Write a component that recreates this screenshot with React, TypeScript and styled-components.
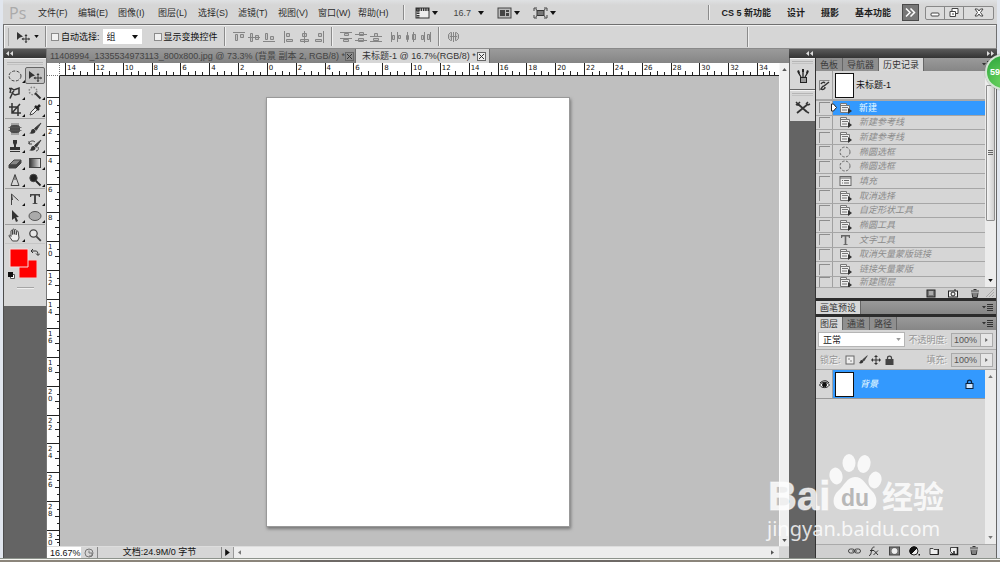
import React from "react";
import styled, { createGlobalStyle, css } from "styled-components";

const GlobalStyle = createGlobalStyle`
  *, *::before, *::after { box-sizing: border-box; }
  html, body { margin: 0; padding: 0; }
  body, button, input, select {
    font-family: "Liberation Sans", "Noto Sans CJK SC", sans-serif;
    font-size: 9px;
    line-height: 12px;
    color: #222;
  }
  button { border: 0; padding: 0; margin: 0; background: none; }
  svg { display: block; flex: none; }
`;

/* ---------- frame ---------- */

const Frame = styled.div`
  position: relative;
  display: flex;
  flex-direction: column;
  height: 100vh;
  min-height: 540px;
  padding: 0 3px;
  overflow: hidden;
  background: #e1e6ee;
`;

const Taskbar = styled.div`
  display: flex;
  align-items: flex-end;
  flex: none;
  height: 4px;
  margin: 0 -3px;
  border-top: 1px solid #8d938c;
  background: #f6f6f2;
  &::after {
    content: "";
    flex: 1;
    height: 2px;
    background: linear-gradient(90deg, #8b857b 30%, #6e6966 30%, #6e6966 64%, #8b857b 64%);
  }
`;

/* ---------- menu bar ---------- */

const MenuBar = styled.header`
  display: flex;
  align-items: center;
  flex: none;
  height: 24px;
  padding: 1px 3px 0 6px;
  background: linear-gradient(#dfe1e3, #d6d6d6 5px);
`;

const Logo = styled.span`
  width: 29px;
  font-family: "Open Sans", sans-serif;
  font-size: 16px;
  line-height: 20px;
  color: #aaa;
`;

const MenuList = styled.nav`
  display: grid;
  grid-template-columns: repeat(8, 40px) 44px;
  margin-right: 1px;
`;

const MenuButton = styled.button`
  text-align: left;
  white-space: nowrap;
  color: #2c2c2c;
`;

const Rule = styled.span<{ $h?: number; $m?: string }>`
  flex: none;
  width: 2px;
  height: ${(p) => p.$h ?? 15}px;
  margin: ${(p) => p.$m ?? "0"};
  border-left: 1px solid #8b8b8b;
  border-right: 1px solid #efefef;
`;

const DropButton = styled.button<{ $w: number; $gap?: number; $end?: boolean }>`
  display: flex;
  align-items: center;
  justify-content: ${(p) => (p.$end ? "flex-end" : "space-between")};
  gap: ${(p) => (p.$end ? "7px" : "0")};
  width: ${(p) => p.$w}px;
  margin-right: ${(p) => p.$gap ?? 13}px;
  color: #444;
`;

const Spacer = styled.span`
  flex: 1;
`;

const Workspaces = styled.nav`
  display: flex;
  gap: 16px;
  margin: 0 11px;
`;

const WorkspaceButton = styled.button`
  font-weight: 700;
  white-space: nowrap;
  color: #1c1c1c;
`;

const MoreButton = styled.button`
  display: grid;
  place-items: center;
  width: 17px;
  height: 17px;
  border: 1px solid #4a4a4a;
  background: #777;
`;

const WindowControls = styled.div`
  display: grid;
  grid-template-columns: 18px 19px 30px;
  height: 14px;
  margin-left: 6px;
  border: 1px solid #888;
  border-radius: 2px;
  background: #dcdcdc;
`;

const WindowButton = styled.button`
  display: grid;
  place-items: center;
  & + & { border-left: 1px solid #888; }
`;

/* ---------- options bar ---------- */

const OptionsBar = styled.div`
  display: flex;
  align-items: center;
  flex: none;
  height: 25px;
  border: 1px solid #707070;
  border-bottom-color: #8a8a8a;
  box-shadow: inset 1px 1px #f2f2f2;
  background: #d6d6d6;
`;

const Grip = styled.span`
  width: 3px;
  height: 18px;
  margin: 0 7px 0 2px;
  border-right: 1px solid #aaa;
`;

const CheckLabel = styled.label`
  display: flex;
  align-items: center;
  gap: 2px;
  white-space: nowrap;
  color: #111;
`;

const Check = styled.input`
  appearance: none;
  width: 8px;
  height: 8px;
  margin: 0;
  border: 1px solid #8b8b8b;
  background: #f1f1f1;
`;

const SelectBox = styled.span<{ $w?: number; $m?: string }>`
  position: relative;
  display: flex;
  flex: ${(p) => (p.$w ? "none" : "1")};
  width: ${(p) => (p.$w ? p.$w + "px" : "auto")};
  height: 15px;
  margin: ${(p) => p.$m ?? "0"};
  background: #fff;
  svg {
    position: absolute;
    right: 4px;
    top: 50%;
    margin-top: -2px;
    pointer-events: none;
  }
`;

const Select = styled.select<{ $framed?: boolean }>`
  appearance: none;
  width: 100%;
  padding: 0 4px;
  border: ${(p) => (p.$framed ? "1px solid #b5b5b5" : "0")};
  border-radius: 0;
  background: #fff;
`;

const IconGroup = styled.div<{ $m?: string; $gap?: number }>`
  display: flex;
  gap: ${(p) => p.$gap ?? 3}px;
  margin: ${(p) => p.$m ?? "0"};
`;

const IconButton = styled.button<{ $w?: number }>`
  display: grid;
  place-items: center;
  flex: none;
  width: ${(p) => p.$w ?? 12}px;
`;

/* ---------- work area ---------- */

const Body = styled.div`
  display: grid;
  grid-template-columns: 44px minmax(0, 1fr) 208px;
  flex: 1;
  min-height: 0;
  background: #646464;
`;

const ToolColumn = styled.aside`
  border-left: 1px solid #4d4d4d;
  border-right: 1px solid #777;
`;

const DarkHeader = styled.div<{ $pad: string }>`
  display: flex;
  align-items: center;
  justify-content: space-between;
  height: 9px;
  padding: ${(p) => p.$pad};
  background: linear-gradient(#5a5a5a, #343434);
`;

const ToolPanel = styled.div`
  padding: 3px 1px 17px;
  border-top: 1px solid #efefef;
  background: #d6d6d6;
`;

const PanelGrip = styled.div`
  height: 3px;
  margin: 0 2px 2px;
  border-top: 1px solid #b5b5b5;
  border-bottom: 1px solid #c2c2c2;
`;

const ToolGroup = styled.div`
  display: grid;
  grid-template-columns: 20px 20px;
  grid-auto-rows: 17px;
  & + & { border-top: 1px solid #a0a0a0; padding-top: 1px; }
`;

const ToolButton = styled.button<{ $on?: boolean }>`
  position: relative;
  display: grid;
  place-items: center;
  ${(p) =>
    p.$on &&
    css`
      border: 1px solid #666;
      border-radius: 2px;
      background: #c3c3c3;
    `}
  &[data-more="true"]::after {
    content: "";
    position: absolute;
    right: 0;
    bottom: 1px;
    border-left: 3px solid transparent;
    border-bottom: 3px solid #111;
  }
`;

const SwatchArea = styled.div`
  padding: 4px 0 0 2px;
  border-top: 1px solid #c5c5c5;
`;

const PanelFoot = styled.div`
  width: 17px;
  height: 2px;
  margin: 8px 0 0 12px;
  border-top: 1px solid #a5a5a5;
  border-bottom: 1px solid #eee;
`;

const Documents = styled.main`
  display: flex;
  flex-direction: column;
  min-width: 0;
  background: #bfbfbf;
`;

const DocTabs = styled.div`
  display: flex;
  height: 14px;
  background: linear-gradient(#9b9b9b, #858585);
`;

const DocTab = styled.div<{ $on?: boolean; $w: number }>`
  display: flex;
  align-items: center;
  justify-content: space-between;
  flex: none;
  width: ${(p) => p.$w}px;
  padding: 0 3px 0 ${(p) => (p.$on ? 6 : 3)}px;
  overflow: hidden;
  white-space: nowrap;
  border-right: 1px solid #6e6e6e;
  background: ${(p) => (p.$on ? "#d6d6d6" : "linear-gradient(#989898, #828282)")};
  button:first-child { color: ${(p) => (p.$on ? "#333" : "#444")}; }
`;

const CloseButton = styled.button<{ $on?: boolean }>`
  display: grid;
  place-items: center;
  flex: none;
  width: 9px;
  height: 9px;
  border: 1px solid #666;
  background: ${(p) => (p.$on ? "#eee" : "#8b8b8b")};
`;

const Stage = styled.div`
  display: grid;
  grid-template-columns: 13px minmax(0, 1fr) 10px;
  grid-template-rows: 13px minmax(0, 1fr) 12px;
  flex: 1;
  min-height: 0;
`;

const RulerCorner = styled.div`
  border-right: 1px dotted #777;
  border-bottom: 1px dotted #777;
  background: #fff;
`;

const TopRuler = styled.div`
  display: grid;
  grid-template-columns: 5px repeat(24, 1fr) 22px;
  overflow: hidden;
  border-bottom: 1px solid #222;
  background: #fff;
`;

const SideRuler = styled.div`
  display: grid;
  grid-template-rows: 21px repeat(15, 1fr) 16px;
  overflow: hidden;
  border-right: 1px solid #222;
  background: #fff;
`;

const RulerCell = styled.div<{ $vertical?: boolean }>`
  display: grid;
  min-width: 0;
  min-height: 0;
  overflow: hidden;
  font-family: "DejaVu Sans", sans-serif;
  font-size: 7px;
  line-height: 7px;
  color: #111;
  ${(p) =>
    p.$vertical
      ? css`
          grid-template-rows: repeat(4, 1fr);
          border-top: 1px solid #222;
        `
      : css`
          grid-template-columns: repeat(4, 1fr);
          border-left: 1px solid #222;
        `}
`;

const RulerNumber = styled.span<{ $vertical?: boolean }>`
  grid-area: ${(p) => (p.$vertical ? "1 / 1 / 5 / 2" : "1 / 1 / 2 / 5")};
  width: ${(p) => (p.$vertical ? "5px" : "auto")};
  padding: ${(p) => (p.$vertical ? "2px 0 0 1px" : "2px 0 0 1px")};
  word-break: break-all;
`;

const Tick = styled.i<{ $vertical?: boolean; $at: number }>`
  ${(p) =>
    p.$vertical
      ? css`
          grid-area: ${p.$at} / 1;
          justify-self: end;
          width: ${p.$at === 3 ? 4 : 2}px;
          border-top: 1px solid #222;
        `
      : css`
          grid-area: 1 / ${p.$at};
          align-self: end;
          height: ${p.$at === 3 ? 4 : 3}px;
          border-left: 1px solid #222;
        `}
`;

const Canvas = styled.div`
  min-width: 0;
  min-height: 0;
  overflow: hidden;
  padding: 21px 0 0 206px;
`;

const Paper = styled.div`
  width: 304px;
  aspect-ratio: 304 / 430;
  border: 1px solid #999;
  background: #fff;
  box-shadow: 1px 2px 3px #777;
`;

const StageScroll = styled.div`
  grid-row: 1 / 3;
  grid-column: 3;
  display: flex;
  flex-direction: column;
  align-items: center;
  justify-content: space-between;
  padding: 5px 0 4px;
  border-left: 1px solid #f8f8f8;
  background: #efefef;
`;

const StatusBar = styled.footer`
  grid-column: 1 / 4;
  display: flex;
  align-items: stretch;
  padding-right: 10px;
  border-top: 1px solid #ddd;
  background: #d6d6d6;
  line-height: 11px;
`;

const ZoomInput = styled.input`
  width: 34px;
  padding: 0 0 0 3px;
  border: 0;
  background: #fff;
  color: #111;
`;

const DocInfo = styled.span`
  width: 125px;
  text-align: center;
  border-left: 1px solid #888;
  border-right: 1px solid #888;
  color: #111;
`;

const HScroll = styled.div`
  display: flex;
  align-items: center;
  justify-content: space-between;
  flex: 1;
  padding: 0 5px 0 4px;
  border-left: 1px solid #999;
  background: #ededed;
`;

/* ---------- right side ---------- */

const RightSide = styled.aside`
  display: grid;
  grid-template-columns: 26px minmax(0, 1fr);
  grid-template-rows: 9px minmax(0, 1fr);
  min-height: 0;
  & > :first-child { grid-column: 1 / 3; }
`;

const Dock = styled.div`
  display: flex;
  flex-direction: column;
  gap: 1px;
  padding-left: 1px;
`;

const DockButton = styled.button`
  display: flex;
  flex-direction: column;
  align-items: stretch;
  height: 31px;
  padding-top: 2px;
  border-top: 1px solid #f2f2f2;
  background: #d6d6d6;
  svg { align-self: center; margin-top: 2px; }
`;

const Panels = styled.div`
  display: flex;
  flex-direction: column;
  gap: 3px;
  min-height: 0;
  border-left: 1px solid #333;
  border-right: 1px solid #666;
  background: #2c2c2c;
`;

const Panel = styled.section<{ $grow?: boolean }>`
  display: flex;
  flex-direction: column;
  flex: ${(p) => (p.$grow ? "1" : "none")};
  min-height: 0;
  background: #d6d6d6;
`;

const PanelTabs = styled.div`
  display: flex;
  align-items: center;
  flex: none;
  height: 13px;
  padding-right: 3px;
  background: linear-gradient(#9a9a9a, #868686);
  & > svg { margin-left: auto; }
`;

const PanelTab = styled.button<{ $on?: boolean }>`
  height: 13px;
  padding: 0 4px;
  white-space: nowrap;
  border-right: 1px solid #666;
  color: ${(p) => (p.$on ? "#333" : "#3c3c3c")};
  background: ${(p) => (p.$on ? "#d8d8d8" : "#8f8f8f")};
`;

const PanelBody = styled.div`
  display: grid;
  grid-template-columns: minmax(0, 1fr) 11px;
  flex: 1;
  min-height: 0;
`;

const Snapshot = styled.div`
  display: flex;
  align-items: center;
  gap: 2px;
  height: 30px;
  border-bottom: 2px solid #a8a8a8;
  color: #111;
`;

const LeadCell = styled.span`
  display: grid;
  place-items: center;
  align-self: stretch;
  flex: none;
  width: 17px;
  border-right: 1px solid #a0a0a0;
`;

const Thumb = styled.span`
  flex: none;
  width: 19px;
  height: 25px;
  border: 1px solid #111;
  background: #fff;
`;

const HistoryList = styled.ul`
  display: grid;
  grid-template-rows: repeat(12, 1fr) 10px;
  height: 186px;
  margin: 0;
  padding: 0;
  list-style: none;
  overflow: hidden;
`;

const HistoryRow = styled.li<{ $on?: boolean }>`
  display: flex;
  align-items: center;
  min-height: 0;
  overflow: hidden;
  border-bottom: 1px solid #a6a6a6;
  &:last-child { align-items: flex-start; border-bottom: 0; }
  color: ${(p) => (p.$on ? "#e9fbff" : "#8c8c8c")};
  font-style: ${(p) => (p.$on ? "normal" : "italic")};
`;

const HistoryBox = styled.span`
  width: 11px;
  height: 11px;
  border-top: 1px solid #8d8d8d;
  border-left: 1px solid #8d8d8d;
`;

const HistoryState = styled.button<{ $on?: boolean }>`
  display: flex;
  align-items: center;
  gap: 7px;
  align-self: stretch;
  flex: 1;
  padding-left: 6px;
  font-style: inherit;
  color: inherit;
  background: ${(p) => (p.$on ? "#3399fe" : "none")};
`;

/* The source marker straddles the divider between the box column and the states. */
const Marker = styled.svg`
  position: absolute;
  margin-left: 15px;
`;

const ScrollTrack = styled.div<{ $top: number }>`
  display: flex;
  flex-direction: column;
  justify-content: space-between;
  align-items: center;
  padding: ${(p) => p.$top}px 1px 5px 0;
  background: #ececec;
`;

const ScrollThumb = styled.div`
  display: grid;
  place-items: center;
  width: 9px;
  height: 136px;
  border: 1px solid #8f8f8f;
  border-radius: 1px;
  background: linear-gradient(90deg, #f4f4f4, #cfcfcf);
`;

const PanelFooter = styled.div<{ $gap: number; $pad: string; $h: number }>`
  display: flex;
  align-items: center;
  justify-content: flex-end;
  gap: ${(p) => p.$gap}px;
  flex: none;
  height: ${(p) => p.$h}px;
  padding: ${(p) => p.$pad};
  border-top: 1px solid #aaa;
  background: #d0d0d0;
`;

const ControlRow = styled.div`
  display: flex;
  align-items: center;
  flex: none;
  height: 20px;
  padding: 0 3px 0 2px;
  border-bottom: 1px solid #aaa;
`;

const DimLabel = styled.label`
  white-space: nowrap;
  color: #969696;
  text-shadow: 1px 1px #f4f4f4;
`;

const LockLabel = styled.span`
  width: 27px;
  padding-left: 2px;
  white-space: nowrap;
  color: #969696;
  text-shadow: 1px 1px #f4f4f4;
`;

const PercentBox = styled.span`
  display: flex;
  flex: none;
  height: 14px;
  margin-left: 4px;
  border: 1px solid #aaa;
`;

const PercentInput = styled.input`
  width: 28px;
  padding: 0 0 0 2px;
  border: 0;
  background: #d0d0d0;
  color: #555;
`;

const PercentArrow = styled.button`
  display: grid;
  place-items: center;
  width: 12px;
  border-left: 1px solid #aaa;
  background: #e6e6e6;
`;

const LayerRow = styled.div`
  display: flex;
  height: 29px;
  border-bottom: 1px solid #999;
`;

const LayerSelect = styled.button`
  display: flex;
  align-items: center;
  gap: 6px;
  flex: 1;
  padding: 0 11px 0 2px;
  font-style: italic;
  color: #e9fbff;
  background: #3399fe;
  svg { margin-left: auto; }
`;

/* ---------- overlays ---------- */

const Badge = styled.span`
  position: absolute;
  top: 54px;
  right: -21px;
  width: 36px;
  height: 36px;
  padding-left: 3px;
  border: 2px solid #d5e5d5;
  border-radius: 50%;
  background: radial-gradient(circle at 50% 80%, #6bd45f, #2ba33b);
  box-shadow: 0 0 1px #555;
  font-weight: 700;
  line-height: 32px;
  color: #fff;
`;

const Watermark = styled.div`
  position: absolute;
  right: 55px;
  bottom: 21px;
  width: 178px;
  color: rgba(255, 255, 255, 0.82);
  pointer-events: none;
`;

const WatermarkLogo = styled.div`
  display: flex;
  align-items: flex-end;
  font-weight: 700;
  white-space: nowrap;
`;

const Bai = styled.span`
  width: 62px;
  padding-left: 1px;
  font-size: 40px;
  line-height: 42px;
  -webkit-text-stroke: 1px rgba(255, 255, 255, 0.5);
`;

const Paw = styled.span`
  position: relative;
  width: 53px;
  height: 60px;
  margin-bottom: 6px;
`;

const Du = styled.span`
  position: absolute;
  left: 12px;
  bottom: 1px;
  font-size: 23px;
  line-height: 24px;
  color: #b8b8b8;
`;

const JingYan = styled.span`
  margin-bottom: 4px;
  font-family: "Noto Sans CJK SC", sans-serif;
  font-size: 31px;
  line-height: 36px;
`;

const WatermarkUrl = styled.div`
  font-family: "Noto Sans", sans-serif;
  font-size: 20px;
  line-height: 24px;
`;

/* ---------- drawings ---------- */

type Dir = "down" | "up" | "left" | "right";
const arrowPath: Record<Dir, string> = {
  down: "M0 0h6L3 4z",
  up: "M0 4h6L3 0z",
  left: "M4 0v6L0 3z",
  right: "M0 0v6l4-3z",
};

const Arrow = ({ dir = "down", size = 6, color = "#111" }: { dir?: Dir; size?: number; color?: string }) => {
  const flat = dir === "down" || dir === "up";
  const box = flat ? "0 0 6 4" : "0 0 4 6";
  const short = Math.round((size * 2) / 3);
  return (
    <svg width={flat ? size : short} height={flat ? short : size} viewBox={box} fill={color}>
      <path d={arrowPath[dir]} />
    </svg>
  );
};

const DoubleArrow = ({ flip }: { flip?: boolean }) => (
  <svg width="7" height="5" viewBox="0 0 7 5" fill="#ddd">
    <path d={flip ? "M0 0l3 2.5L0 5zM4 0l3 2.5L4 5z" : "M3 0v5L0 2.5zM7 0v5L4 2.5z"} />
  </svg>
);

const Draw = ({ w = 14, h = 14, children }: { w?: number; h?: number; children: React.ReactNode }) => (
  <svg width={w} height={h} viewBox={`0 0 ${w} ${h}`} fill="none" stroke="#444" strokeWidth="1">
    {children}
  </svg>
);

const MoveIcon = () => (
  <Draw w={14} h={12}>
    <path d="M1 1v8l2.500-2.200L7 5.500z" fill="#333" stroke="none" />
    <path d="M10 4.500v7M6.500 8h7" stroke="#333" />
    <path d="M10 3l1.500 2h-3zM10 12l1.500-1.500h-3zM5.500 8l2-1.500v3zM14 8l-1.500-1.500v3z" fill="#333" stroke="none" />
  </Draw>
);

const BrushShape = () => (
  <>
    <path d="M13 1L6.500 6.500l1.800 1.800z" fill="#333" />
    <path d="M6 7c-2-.5-3 1-3 2.500-.3 1-1 1.500-2 1.500 2 1.500 7 1 6.500-2.500z" fill="#333" stroke="none" />
  </>
);

const MenuGlyph = () => (
  <svg width="11" height="7" viewBox="0 0 11 7" fill="#333">
    <path d="M0 2h4L2 4.500zM5 0h6v1H5zM5 2h6v1H5zM5 4h6v1H5zM5 6h6v1H5z" />
  </svg>
);

const tools: { name: string; more?: boolean; on?: boolean; art: React.ReactNode }[][] = [
  [
    { name: "椭圆选框工具", more: true, art: <Draw><ellipse cx="7" cy="7" rx="6" ry="5" strokeDasharray="3 1.500" /></Draw> },
    { name: "移动工具", on: true, art: <MoveIcon /> },
    { name: "套索工具", more: true, art: <Draw><path d="M3 2l3 2 5-2v6l-4 1-3-2 2-2M4 8l-2 4.500M1 2.500h2L2 7" stroke="#333" strokeWidth="1.500" /></Draw> },
    { name: "魔棒工具", more: true, art: <Draw><circle cx="5" cy="5" r="3.800" strokeDasharray="1.500 1.500" strokeWidth="1.500" stroke="#888" /><path d="M7 7l5.500 5.500" stroke="#333" strokeWidth="2" /></Draw> },
    { name: "裁剪工具", more: true, art: <Draw><path d="M4 0v10h9M1 4h9v9M4 10l8-9" stroke="#333" strokeWidth="1.500" /></Draw> },
    { name: "吸管工具", more: true, art: <Draw><path d="M2 12l1-3 5-5 2 2-5 5z" fill="#eee" /><path d="M7 3l4 4M8.500 5.500L12 2" stroke="#222" strokeWidth="2.500" /></Draw> },
  ],
  [
    { name: "修复画笔工具", more: true, art: <Draw><rect x="2.500" y="3.500" width="9" height="7" rx="2" fill="#444" /><path d="M4 1v12M6 1v12M8 1v12M10 1v12M0.500 5.500h13M0.500 8.500h13" stroke="#555" strokeWidth=".8" /></Draw> },
    { name: "画笔工具", more: true, art: <Draw><BrushShape /></Draw> },
    { name: "图章工具", more: true, art: <Draw><path d="M5 1h4v3L8 6v2h4v3H2V8h4V6L5 4zM2 12h10v1H2z" fill="#333" stroke="none" /></Draw> },
    { name: "历史画笔工具", more: true, art: <Draw><BrushShape /><path d="M1 5c0-3 4-4 6-2M1 2v3h3M10 8c1 2 0 4-2 4" /></Draw> },
    { name: "橡皮擦工具", more: true, art: <Draw><path d="M1 9l5-5h7l-5 5z" fill="#888" /><path d="M1 9v3h7V9zM8 9l5-5v3l-5 5z" fill="#444" /></Draw> },
    { name: "渐变工具", more: true, art: <Draw><defs><linearGradient id="ramp"><stop stopColor="#333" /><stop offset="1" stopColor="#eee" /></linearGradient></defs><rect x="1.500" y="2.500" width="11" height="9" fill="url(#ramp)" /></Draw> },
    { name: "锐化工具", more: true, art: <Draw><path d="M7 1.500L3 12.500h8zM7 2v5" /></Draw> },
    { name: "减淡工具", more: true, art: <Draw><circle cx="5.500" cy="5" r="3.700" fill="#222" /><path d="M8 8l4.500 4.500" stroke="#222" strokeWidth="1.800" /></Draw> },
  ],
  [
    { name: "钢笔工具", more: true, art: <Draw><path d="M3.500 13V2l7 6.500" /><path d="M3.500 2l1 6" /></Draw> },
    { name: "文字工具", more: true, art: <Draw><path d="M2 2h10v3h-1l-.6-1.500H8V11l1.500.4V12h-5v-.6L6 11V3.500H3.600L3 5H2z" fill="#444" stroke="none" /></Draw> },
    { name: "路径选择工具", more: true, art: <Draw><path d="M4 1v10l2.500-2L8 13l2-1-1.800-3.700L11 8z" fill="#333" stroke="none" /></Draw> },
    { name: "椭圆工具", more: true, art: <Draw><ellipse cx="7" cy="7" rx="6" ry="4.500" fill="#aaa" stroke="#555" /></Draw> },
  ],
  [
    { name: "抓手工具", more: true, art: <Draw><path d="M4.500 13L1 8c0-1.300 1-1.300 2 .5V3c.3-1 1.400-1 1.600 0v3.500V1.800c.3-1 1.500-1 1.700 0v4.500l.2-4c.3-1 1.500-1 1.700 0v4.500l.4-3c.3-1 1.500-1 1.600 0L11 10l-1.500 3z" fill="#eee" /></Draw> },
    { name: "缩放工具", art: <Draw><circle cx="5.500" cy="5.500" r="3.700" fill="#e6e6e6" strokeWidth="1.300" /><path d="M8.300 8.300l4.500 4.500" strokeWidth="1.800" /></Draw> },
  ],
];

const Swatches = () => (
  <svg width="33" height="31" viewBox="0 0 33 31">
    <path d="M12 12h18v18H12z" fill="#f00" stroke="#e8d0d0" />
    <path d="M3 1h18v18H3z" fill="#f00" stroke="#f4dede" />
    <path d="M25 3h4c1 0 2 1 2 4M26 1l-2 2 2 2M29 5.500l2 2 2-2" fill="none" stroke="#333" />
    <path d="M3.500 26.500h4v4h-4z" fill="#fff" stroke="#555" />
    <path d="M1 24h5v5H1z" fill="#111" />
  </svg>
);

/* Two bars of different length hung on a guide line, one drawing per alignment edge. */
const alignArt: Record<string, string> = {
  top: "M0 1.500h12M2.500 3.500h2v6h-2zM7.500 3.500h3v3h-3z",
  vmid: "M0 6.500h12M2.500 2.500h2v8h-2zM7.500 4.500h3v4h-3z",
  bottom: "M0 10.500h12M2.500 2.500h2v6h-2zM7.500 5.500h3v3h-3z",
  left: "M1.500 0v12M3.500 2.500h3v3h-3zM3.500 8.500h6v2h-6z",
  hmid: "M6.500 0v12M4.500 2.500h4v3h-4zM2.500 8.500h8v2h-8z",
  right: "M10.500 0v12M5.500 2.500h3v3h-3zM2.500 8.500h6v2h-6z",
  dtop: "M0 1.500h12M0 7.500h12M4.500 2.500h4v2h-4zM3.500 8.500h5v2h-5z",
  dvmid: "M0 3.500h12M0 9.500h12M4.500 1.500h4v3h-4zM3.500 7.500h5v3h-5z",
  dbottom: "M0 5.500h12M0 10.500h12M4.500 2.500h3v3h-3zM3.500 7.500h5v2h-5z",
  dleft: "M1.500 1v10M7.500 1v10M2.500 4.500h2v4h-2zM8.500 4.500h2v3h-2z",
  dhmid: "M2.500 1v10M8.500 1v10M1.500 4.500h2v4h-2zM7.500 3.500h3v5h-3z",
  dright: "M4.500 1v10M10.500 1v10M1.500 4.500h2v4h-2zM7.500 3.500h2v5h-2z",
  auto: "M6.500 1v10M1.500 3.500l2-2h1v8h-1l-2-2zM8.500 1.500h1l2 2v4l-2 2h-1zM3 5.500h7",
};

const alignNames: Record<string, string> = {
  top: "顶对齐", vmid: "垂直居中对齐", bottom: "底对齐", left: "左对齐", hmid: "水平居中对齐", right: "右对齐",
  dtop: "按顶分布", dvmid: "垂直居中分布", dbottom: "按底分布", dleft: "按左分布", dhmid: "水平居中分布", dright: "按右分布",
  auto: "自动对齐图层",
};

const AlignButtons = ({ kinds, m }: { kinds: string[]; m: string }) => (
  <IconGroup $m={m}>
    {kinds.map((k) => (
      <IconButton key={k} aria-label={alignNames[k]}>
        <svg width="12" height="12" viewBox="0 0 12 12" fill="#c4c4c4" stroke="#858585">
          <path d={alignArt[k]} />
        </svg>
      </IconButton>
    ))}
  </IconGroup>
);

const HistoryIcon = ({ kind }: { kind: string }) => (
  <Draw w={13} h={12}>
    {kind === "ellipse" && <circle cx="6" cy="6" r="5" stroke="#666" strokeDasharray="2.500 1.500" />}
    {kind === "text" && <path d="M2 1h9v3h-1l-.5-1.500H7.300V10l1.500.4V11h-4.500v-.6L5.700 10V2.500H3.500L3 4H2z" fill="#666" stroke="none" />}
    {kind === "fill" && <><rect x="1" y="1.500" width="11" height="9" fill="#eee" stroke="#666" /><path d="M1 3h11M3 5.500h1M5 5.500h5M3 8h1M5 8h5" stroke="#666" /></>}
    {kind === "menu" && (
      <>
        <path d="M1.500 1.500h6v2h3v7h-9z" fill="#eee" stroke="#777" />
        <path d="M1.500 3.500h6M3 5.500h6M3 8h5" stroke="#777" />
        <path d="M9 6v6l4-3z" fill="#333" stroke="none" />
      </>
    )}
  </Draw>
);

const history: [string, string][] = [
  ["新建", "menu"], ["新建参考线", "menu"], ["新建参考线", "menu"], ["椭圆选框", "ellipse"], ["椭圆选框", "ellipse"],
  ["填充", "fill"], ["取消选择", "menu"], ["自定形状工具", "menu"], ["椭圆工具", "menu"], ["文字工具", "text"],
  ["取消矢量蒙版链接", "menu"], ["链接矢量蒙版", "menu"], ["新建图层", "menu"],
];

const TrashIcon = () => (
  <Draw w={10} h={9}><path d="M1 2h8M3.500 .5h3M2 3.500l.7 5h4.600l.7-5M4 3.500v5M6 3.500v5" stroke="#333" /></Draw>
);

const LockIcon = ({ color = "#444", fill = "#444" }: { color?: string; fill?: string }) => (
  <Draw w={9} h={10}><path d="M2.500 5V3c0-2.500 4-2.500 4 0v2" stroke={color} strokeWidth="1.300" /><rect x="1" y="4.500" width="7" height="5" fill={fill} stroke={color} /></Draw>
);

const layerActions: [string, React.ReactNode][] = [
  ["链接图层", <Draw w={13} h={10}><rect x="0.500" y="3" width="6" height="4" rx="2" /><rect x="6.500" y="3" width="6" height="4" rx="2" /><path d="M4 5h5" /></Draw>],
  ["图层样式", <Draw w={12} h={10}><path d="M1 9.500c2 0 2-2 2.500-5S5 1 6.500 1M2 4.500h4M6 4.500l4 4.500M10 4.500L5.500 9" stroke="#333" /></Draw>],
  ["添加蒙版", <Draw w={11} h={10}><rect x="0.500" y="1" width="10" height="8" fill="#777" /><circle cx="5.500" cy="5" r="2.500" fill="#eee" stroke="#eee" /></Draw>],
  ["调整图层", <Draw w={11} h={10}><circle cx="5" cy="5" r="4" fill="#eee" stroke="#222" /><path d="M8 2L2 8A4 4 0 0 1 8 2z" fill="#111" stroke="#111" /><path d="M9.500 8h1.500v1.500H9.500z" fill="#111" stroke="none" /></Draw>],
  ["新建组", <Draw w={10} h={10}><path d="M1 2.500h3l1 1h4v5H1z" fill="#eee" /><path d="M1 8.500h8.500V3" stroke="#222" /></Draw>],
  ["新建图层", <Draw w={10} h={10}><path d="M1.500 1.500h7v7h-4l-3-3z" fill="#eee" /><path d="M1 8.500h7.500V1M5 5v3" stroke="#222" strokeWidth="1.500" /></Draw>],
  ["删除图层", <TrashIcon />],
];

/* ---------- composed parts ---------- */

const menus = ["文件(F)", "编辑(E)", "图像(I)", "图层(L)", "选择(S)", "滤镜(T)", "视图(V)", "窗口(W)", "帮助(H)"];

const TopMenu = () => (
  <MenuBar>
    <Logo>Ps</Logo>
    <MenuList>{menus.map((m) => <MenuButton key={m}>{m}</MenuButton>)}</MenuList>
    <Rule $m="0 10px 0 0" />
    <DropButton $w={23} aria-label="启动 Bridge">
      <Draw w={15} h={12}><rect x="1" y="1" width="13" height="10" fill="#eee" stroke="#333" /><path d="M1 2.500h13M3 1v10" stroke="#333" strokeWidth="3" strokeDasharray="1.500 .8" /></Draw>
      <Arrow />
    </DropButton>
    <DropButton $w={33} $end><span>16.7</span><Arrow /></DropButton>
    <DropButton $w={23} aria-label="排列文档">
      <Draw w={15} h={12}><rect x="1" y="1" width="13" height="10" fill="#bbb" /><path d="M3 3h5v6H3zM9 3h3v2H9zM9 6h3v3H9z" fill="#444" stroke="none" /></Draw>
      <Arrow />
    </DropButton>
    <DropButton $w={23} aria-label="屏幕模式">
      <Draw w={15} h={12}><rect x="4" y="3.500" width="7" height="5" fill="#777" stroke="#333" /><path d="M1 4V1h3M11 1h3v3M14 8v3h-3M4 11H1V8M2.500 2l2 1.500M12.500 2l-2 1.500M2.500 10l2-1.500M12.500 10l-2-1.500" stroke="#444" /></Draw>
      <Arrow />
    </DropButton>
    <Spacer />
    <Rule />
    <Workspaces>
      {["CS 5 新功能", "设计", "摄影", "基本功能"].map((w) => <WorkspaceButton key={w}>{w}</WorkspaceButton>)}
    </Workspaces>
    <MoreButton aria-label="更多工作区">
      <svg width="11" height="9" viewBox="0 0 11 9" fill="none" stroke="#fff" strokeWidth="1.500"><path d="M1 .5l4 4-4 4M5.500 .5l4 4-4 4" /></svg>
    </MoreButton>
    <WindowControls>
      <WindowButton aria-label="最小化"><Draw w={10} h={8}><rect x="1" y="4" width="8" height="3" rx="1" fill="#fff" /></Draw></WindowButton>
      <WindowButton aria-label="还原"><Draw w={10} h={9}><path d="M3 .5h6v5H3z" fill="#fff" /><path d="M1 3.500h5.500v5H1z" fill="#fff" /><path d="M3 6h2" /></Draw></WindowButton>
      <WindowButton aria-label="关闭"><Draw w={10} h={9}><path d="M1 1h2.500L5 3l1.500-2H9L6.500 4.500 9 8H6.500L5 6 3.500 8H1l2.500-3.500z" fill="#fff" /></Draw></WindowButton>
    </WindowControls>
  </MenuBar>
);

const Options = () => (
  <OptionsBar>
    <Grip />
    <DropButton $w={23} $gap={6} aria-label="当前工具"><MoveIcon /><Arrow size={5} /></DropButton>
    <Rule $h={21} $m="0 4px 0 0" />
    <CheckLabel><Check type="checkbox" />自动选择:</CheckLabel>
    <SelectBox $w={39} $m="0 12px 0 3px">
      <Select aria-label="自动选择对象"><option>组</option></Select>
      <Arrow />
    </SelectBox>
    <CheckLabel><Check type="checkbox" />显示变换控件</CheckLabel>
    <Rule $h={19} $m="0 0 0 6px" />
    <AlignButtons kinds={["top", "vmid", "bottom"]} m="0 0 0 7px" />
    <AlignButtons kinds={["left", "hmid", "right"]} m="0 0 0 8px" />
    <Rule $h={19} $m="0 0 0 6px" />
    <AlignButtons kinds={["dtop", "dvmid", "dbottom"]} m="0 0 0 7px" />
    <AlignButtons kinds={["dleft", "dhmid", "dright"]} m="0 0 0 8px" />
    <Rule $h={19} $m="0 0 0 6px" />
    <AlignButtons kinds={["auto"]} m="0 0 0 7px" />
    <Spacer />
    <Rule $h={20} $m="0 247px 0 0" />
  </OptionsBar>
);

const Toolbox = () => (
  <ToolColumn>
    <DarkHeader $pad="0 2px"><DoubleArrow /></DarkHeader>
    <ToolPanel>
      <PanelGrip />
      {tools.map((group, i) => (
        <ToolGroup key={i}>
          {group.map((t) => (
            <ToolButton key={t.name} $on={t.on} data-more={!!t.more} aria-label={t.name}>{t.art}</ToolButton>
          ))}
        </ToolGroup>
      ))}
      <SwatchArea><Swatches /></SwatchArea>
      <PanelFoot />
    </ToolPanel>
  </ToolColumn>
);

const Cell = ({ n, vertical }: { n: number; vertical?: boolean }) => (
  <RulerCell $vertical={vertical}>
    <RulerNumber $vertical={vertical}>{n}</RulerNumber>
    {[2, 3, 4].map((at) => <Tick key={at} $at={at} $vertical={vertical} />)}
  </RulerCell>
);

const topMarks = Array.from({ length: 25 }, (_, i) => Math.abs(i * 2 - 14));
const sideMarks = Array.from({ length: 16 }, (_, i) => i * 2);

const Close = ({ on }: { on?: boolean }) => (
  <CloseButton $on={on} aria-label="关闭文档">
    <svg width="5" height="5" viewBox="0 0 5 5" stroke="#333"><path d="M0 0l5 5M5 0L0 5" /></svg>
  </CloseButton>
);

const Workspace = () => (
  <Documents>
    <DocTabs>
      <DocTab $w={309}><button>11408994_1335534973113_800x800.jpg @ 73.3% (背景 副本 2, RGB/8) *</button><Close /></DocTab>
      <DocTab $w={134} $on><button>未标题-1 @ 16.7%(RGB/8) *</button><Close on /></DocTab>
    </DocTabs>
    <Stage>
      <RulerCorner />
      <TopRuler><span />{topMarks.map((n, i) => <Cell key={i} n={n} />)}</TopRuler>
      <StageScroll><Arrow dir="up" size={5} color="#555" /><Arrow size={5} color="#555" /></StageScroll>
      <SideRuler><span />{sideMarks.map((n) => <Cell key={n} n={n} vertical />)}</SideRuler>
      <Canvas><Paper /></Canvas>
      <StatusBar>
        <ZoomInput aria-label="缩放比例" defaultValue="16.67%" />
        <IconButton $w={16} aria-label="版本"><Draw w={10} h={10}><circle cx="5" cy="5" r="4" stroke="#777" /><path d="M5 2.500V5h3v3H5" stroke="#777" /></Draw></IconButton>
        <DocInfo>文档:24.9M/0 字节</DocInfo>
        <IconButton $w={11} aria-label="状态栏菜单"><Arrow dir="right" size={7} /></IconButton>
        <HScroll><Arrow dir="left" size={5} color="#777" /><Arrow dir="right" size={5} color="#555" /></HScroll>
      </StatusBar>
    </Stage>
  </Documents>
);

const HistoryPanel = () => (
  <Panel>
    <PanelTabs>
      <PanelTab>色板</PanelTab><PanelTab>导航器</PanelTab><PanelTab $on>历史记录</PanelTab><MenuGlyph />
    </PanelTabs>
    <PanelBody>
      <div>
        <Snapshot>
          <LeadCell><Draw w={11} h={11}><path d="M.5 10.500V.5h10" stroke="#888" /><path d="M10 2L5 6M5 6c-2 0-2 2-3 3 2 1 4 0 4-2M2 4c1-2 3-2 4-1" stroke="#333" strokeWidth="1.500" /></Draw></LeadCell>
          <Thumb />
          未标题-1
        </Snapshot>
        <HistoryList>
          {history.map(([name, kind], i) => (
            <HistoryRow key={i} $on={i === 0}>
              <LeadCell><HistoryBox /></LeadCell>
              <HistoryState $on={i === 0}>
                <HistoryIcon kind={kind} />
                {name}
              </HistoryState>
              {i === 0 && <Marker width="6" height="9" viewBox="0 0 6 9"><path d="M.5 1h2L5.500 4.500 2.500 8h-2z" fill="#fff" stroke="#222" /></Marker>}
            </HistoryRow>
          ))}
        </HistoryList>
      </div>
      <ScrollTrack $top={14}>
        <ScrollThumb><Draw w={5} h={6}><path d="M0 .5h5M0 2.500h5M0 4.500h5" stroke="#666" /></Draw></ScrollThumb>
        <Arrow size={5} />
      </ScrollTrack>
    </PanelBody>
    <PanelFooter $gap={6} $pad="0 2px 0 0" $h={11}>
      <IconGroup $gap={12}>
        <IconButton $w={10} aria-label="从当前状态创建新文档"><Draw w={10} h={9}><rect x="1" y="1" width="8" height="7" fill="#777" stroke="#222" /><path d="M3 3h4M3 5h4" stroke="#ddd" /></Draw></IconButton>
        <IconButton $w={10} aria-label="创建新快照"><Draw w={10} h={9}><rect x=".5" y="2" width="9" height="6" fill="#eee" stroke="#222" /><circle cx="5" cy="5" r="2" stroke="#222" /><path d="M6 1h2" stroke="#222" /></Draw></IconButton>
        <IconButton $w={10} aria-label="删除当前状态"><TrashIcon /></IconButton>
      </IconGroup>
      <Draw w={8} h={8}><path d="M0 8l8-8M3 8l5-5M6 8l2-2" stroke="#aaa" /></Draw>
    </PanelFooter>
  </Panel>
);

const Percent = ({ id }: { id: string }) => (
  <PercentBox>
    <PercentInput id={id} defaultValue="100%" />
    <PercentArrow aria-label="调整数值"><Arrow dir="right" size={4} color="#666" /></PercentArrow>
  </PercentBox>
);

const LayersPanel = () => (
  <Panel $grow>
    <PanelTabs>
      <PanelTab $on>图层</PanelTab><PanelTab>通道</PanelTab><PanelTab>路径</PanelTab><MenuGlyph />
    </PanelTabs>
    <ControlRow>
      <SelectBox $m="0 3px 0 0">
        <Select $framed aria-label="混合模式"><option>正常</option></Select>
        <Arrow size={5} color="#999" />
      </SelectBox>
      <DimLabel htmlFor="opacity">不透明度:</DimLabel>
      <Percent id="opacity" />
    </ControlRow>
    <ControlRow>
      <LockLabel>锁定:</LockLabel>
      <IconGroup>
        <IconButton $w={10} aria-label="锁定透明像素"><Draw w={10} h={10}><rect x="1" y="1" width="8" height="8" fill="#eee" stroke="#666" /><path d="M3 3h2v2H3zM5 5h2v2H5z" fill="#bbb" stroke="none" /></Draw></IconButton>
        <IconButton $w={10} aria-label="锁定图像像素"><svg width="10" height="10" viewBox="0 0 14 14" stroke="#444"><BrushShape /></svg></IconButton>
        <IconButton $w={10} aria-label="锁定位置"><Draw w={10} h={10}><path d="M5 1v8M1 5h8" stroke="#333" /><path d="M5 0l2 2H3zM5 10l2-2H3zM0 5l2-2v4zM10 5L8 3v4z" fill="#333" stroke="none" /></Draw></IconButton>
        <IconButton $w={10} aria-label="锁定全部"><LockIcon /></IconButton>
      </IconGroup>
      <Spacer />
      <DimLabel htmlFor="fill">填充:</DimLabel>
      <Percent id="fill" />
    </ControlRow>
    <PanelBody>
      <div>
        <LayerRow>
          <LeadCell><Draw w={11} h={9}><path d="M.5 5C3 1.500 8 1.500 10.500 5 8 8.500 3 8.500.5 5z" fill="#fff" stroke="#222" /><circle cx="5.500" cy="4.800" r="2" fill="#111" stroke="#111" /><path d="M1 3c3-3 7-3 9 0" stroke="#222" /></Draw></LeadCell>
          <LayerSelect><Thumb />背景<LockIcon color="#0c2340" fill="#cfe6ff" /></LayerSelect>
        </LayerRow>
      </div>
      <ScrollTrack $top={5}><Arrow dir="up" size={5} color="#777" /><Arrow size={5} color="#777" /></ScrollTrack>
    </PanelBody>
    <PanelFooter $gap={8} $pad="0 16px 2px 0" $h={14}>
      {layerActions.map(([name, art]) => <IconButton key={name} $w={12} aria-label={name}>{art}</IconButton>)}
    </PanelFooter>
  </Panel>
);

export default function App() {
  return (
    <>
      <GlobalStyle />
      <Frame>
        <TopMenu />
        <Options />
        <Body>
          <Toolbox />
          <Workspace />
          <RightSide>
            <DarkHeader $pad="0 3px 0 17px"><DoubleArrow /><DoubleArrow flip /></DarkHeader>
            <Dock>
              <DockButton aria-label="画笔">
                <PanelGrip />
                <Draw w={14} h={16}><rect x="4.500" y="9.500" width="6" height="5" fill="#999" stroke="#222" /><path d="M7 9V2M5 9L2 4M9 9l3-5" stroke="#222" strokeWidth="1.300" /><path d="M6 1h2v3H6zM1 3l2-1 1 3-1 1zM13 3l-2-1-1 3 1 1z" fill="#222" stroke="none" /></Draw>
              </DockButton>
              <DockButton aria-label="工具预设">
                <PanelGrip />
                <Draw w={16} h={16}><path d="M3 4l9 8M2 13L13 4" stroke="#333" strokeWidth="1.800" /><path d="M1 2l2 2 2-2M4 5L2 5 1 4M11 4l2-2M13 5l2-1M12 12l2 1" stroke="#333" strokeWidth="1.500" /></Draw>
              </DockButton>
            </Dock>
            <Panels>
              <HistoryPanel />
              <Panel>
                <PanelTabs><PanelTab $on>画笔预设</PanelTab><MenuGlyph /></PanelTabs>
              </Panel>
              <LayersPanel />
            </Panels>
          </RightSide>
        </Body>
        <Taskbar />
        <Badge>59</Badge>
        <Watermark>
          <WatermarkLogo>
            <Bai>Bai</Bai>
            <Paw>
              <svg width="53" height="60" viewBox="0 0 53 60" fill="rgba(255,255,255,0.82)">
                <ellipse cx="7" cy="25" rx="6.500" ry="8.500" transform="rotate(-12 7 25)" />
                <ellipse cx="20" cy="12" rx="6.500" ry="9" />
                <ellipse cx="35" cy="13" rx="6.500" ry="9" transform="rotate(12 35 13)" />
                <ellipse cx="46" cy="29" rx="6.500" ry="8.500" transform="rotate(12 46 29)" />
                <path d="M26 26c8 0 11 8 17 14 6 5 7 18-4 19-5 .5-8-1-13-1s-8 1.500-13 1C2 58 3 45 9 40c6-5 9-14 17-14z" />
              </svg>
              <Du>du</Du>
            </Paw>
            <JingYan>经验</JingYan>
          </WatermarkLogo>
          <WatermarkUrl>jingyan.baidu.com</WatermarkUrl>
        </Watermark>
      </Frame>
    </>
  );
}
